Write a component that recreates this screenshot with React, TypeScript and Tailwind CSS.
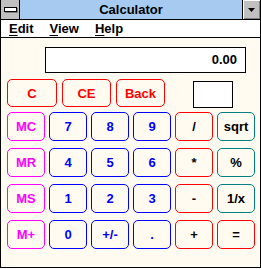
const keys: { label: string; tone: string }[] = [
  { label: "MC", tone: "mem" },
  { label: "7", tone: "num" },
  { label: "8", tone: "num" },
  { label: "9", tone: "num" },
  { label: "/", tone: "op" },
  { label: "sqrt", tone: "fn" },
  { label: "MR", tone: "mem" },
  { label: "4", tone: "num" },
  { label: "5", tone: "num" },
  { label: "6", tone: "num" },
  { label: "*", tone: "op" },
  { label: "%", tone: "fn" },
  { label: "MS", tone: "mem" },
  { label: "1", tone: "num" },
  { label: "2", tone: "num" },
  { label: "3", tone: "num" },
  { label: "-", tone: "op" },
  { label: "1/x", tone: "fn" },
  { label: "M+", tone: "mem" },
  { label: "0", tone: "num" },
  { label: "+/-", tone: "num" },
  { label: ".", tone: "num" },
  { label: "+", tone: "op" },
  { label: "=", tone: "op" },
];

const toneClass: Record<string, string> = {
  mem: "border-[#ff00ff] text-[#ff00ff]",
  num: "border-[#0000ff] text-[#0000ff]",
  op: "border-[#ff0000] text-black",
  fn: "border-[#008080] text-black",
  clr: "border-[#ff0000] text-[#ff0000]",
};

function Key({ label, tone, className = "" }: { label: string; tone: string; className?: string }) {
  return (
    <button
      className={`flex items-center justify-center rounded-[5px] border bg-transparent leading-none ${toneClass[tone]} ${className}`}
    >
      {label}
    </button>
  );
}

export default function App() {
  return (
    <div className="w-[261px] h-[269px] bg-white font-['Liberation_Sans',Arial,sans-serif] font-bold text-[13px] text-black">
      <div className="w-[261px] h-[268px] border-l border-r border-b border-black bg-[#fffbf0] flex flex-col">
        {/* title bar */}
        <div className="h-[20px] flex border-b border-black">
          <div className="w-[19px] bg-[#c0c0c0] border-r border-black flex items-center justify-center">
            <div className="w-[13px] h-[5px] bg-white border border-black shadow-[1px_1px_0_#808080]" />
          </div>
          <div className="flex-1 bg-[#a6caf0] flex items-center justify-center">Calculator</div>
          <div className="w-[18px] border-l border-black bg-[#c0c0c0] shadow-[inset_1px_1px_0_#fff,inset_-1px_-1px_0_#808080] flex items-center justify-center">
            <svg width="7" height="4" viewBox="0 0 7 4">
              <polygon points="0,0 7,0 3.5,4" fill="#000" />
            </svg>
          </div>
        </div>

        {/* menu */}
        <div className="h-[18px] bg-white border-b border-black flex items-center">
          {["Edit", "View", "Help"].map((m) => (
            <span key={m} className="px-2 leading-none">
              <span className="underline underline-offset-[2px]">{m[0]}</span>
              {m.slice(1)}
            </span>
          ))}
        </div>

        {/* body */}
        <div className="flex-1 pl-[6px]">
          <div className="mt-[9px] ml-[38px] w-[201px] h-[26px] bg-white border border-black flex items-center justify-end pr-[8px]">
            0.00
          </div>

          <div className="mt-[6px] flex items-start">
            <Key label="C" tone="clr" className="w-[50px] h-[28px]" />
            <Key label="CE" tone="clr" className="ml-[5px] w-[49px] h-[28px]" />
            <Key label="Back" tone="clr" className="ml-[5px] w-[49px] h-[28px]" />
            <div className="ml-[28px] mt-[2px] w-[40px] h-[27px] bg-white border border-black" />
          </div>

          <div className="mt-[4px] grid grid-cols-[repeat(6,38px)] auto-rows-[29px] gap-x-[4px] gap-y-[7px]">
            {keys.map((k) => (
              <Key key={k.label} label={k.label} tone={k.tone} />
            ))}
          </div>
        </div>
      </div>
    </div>
  );
}
